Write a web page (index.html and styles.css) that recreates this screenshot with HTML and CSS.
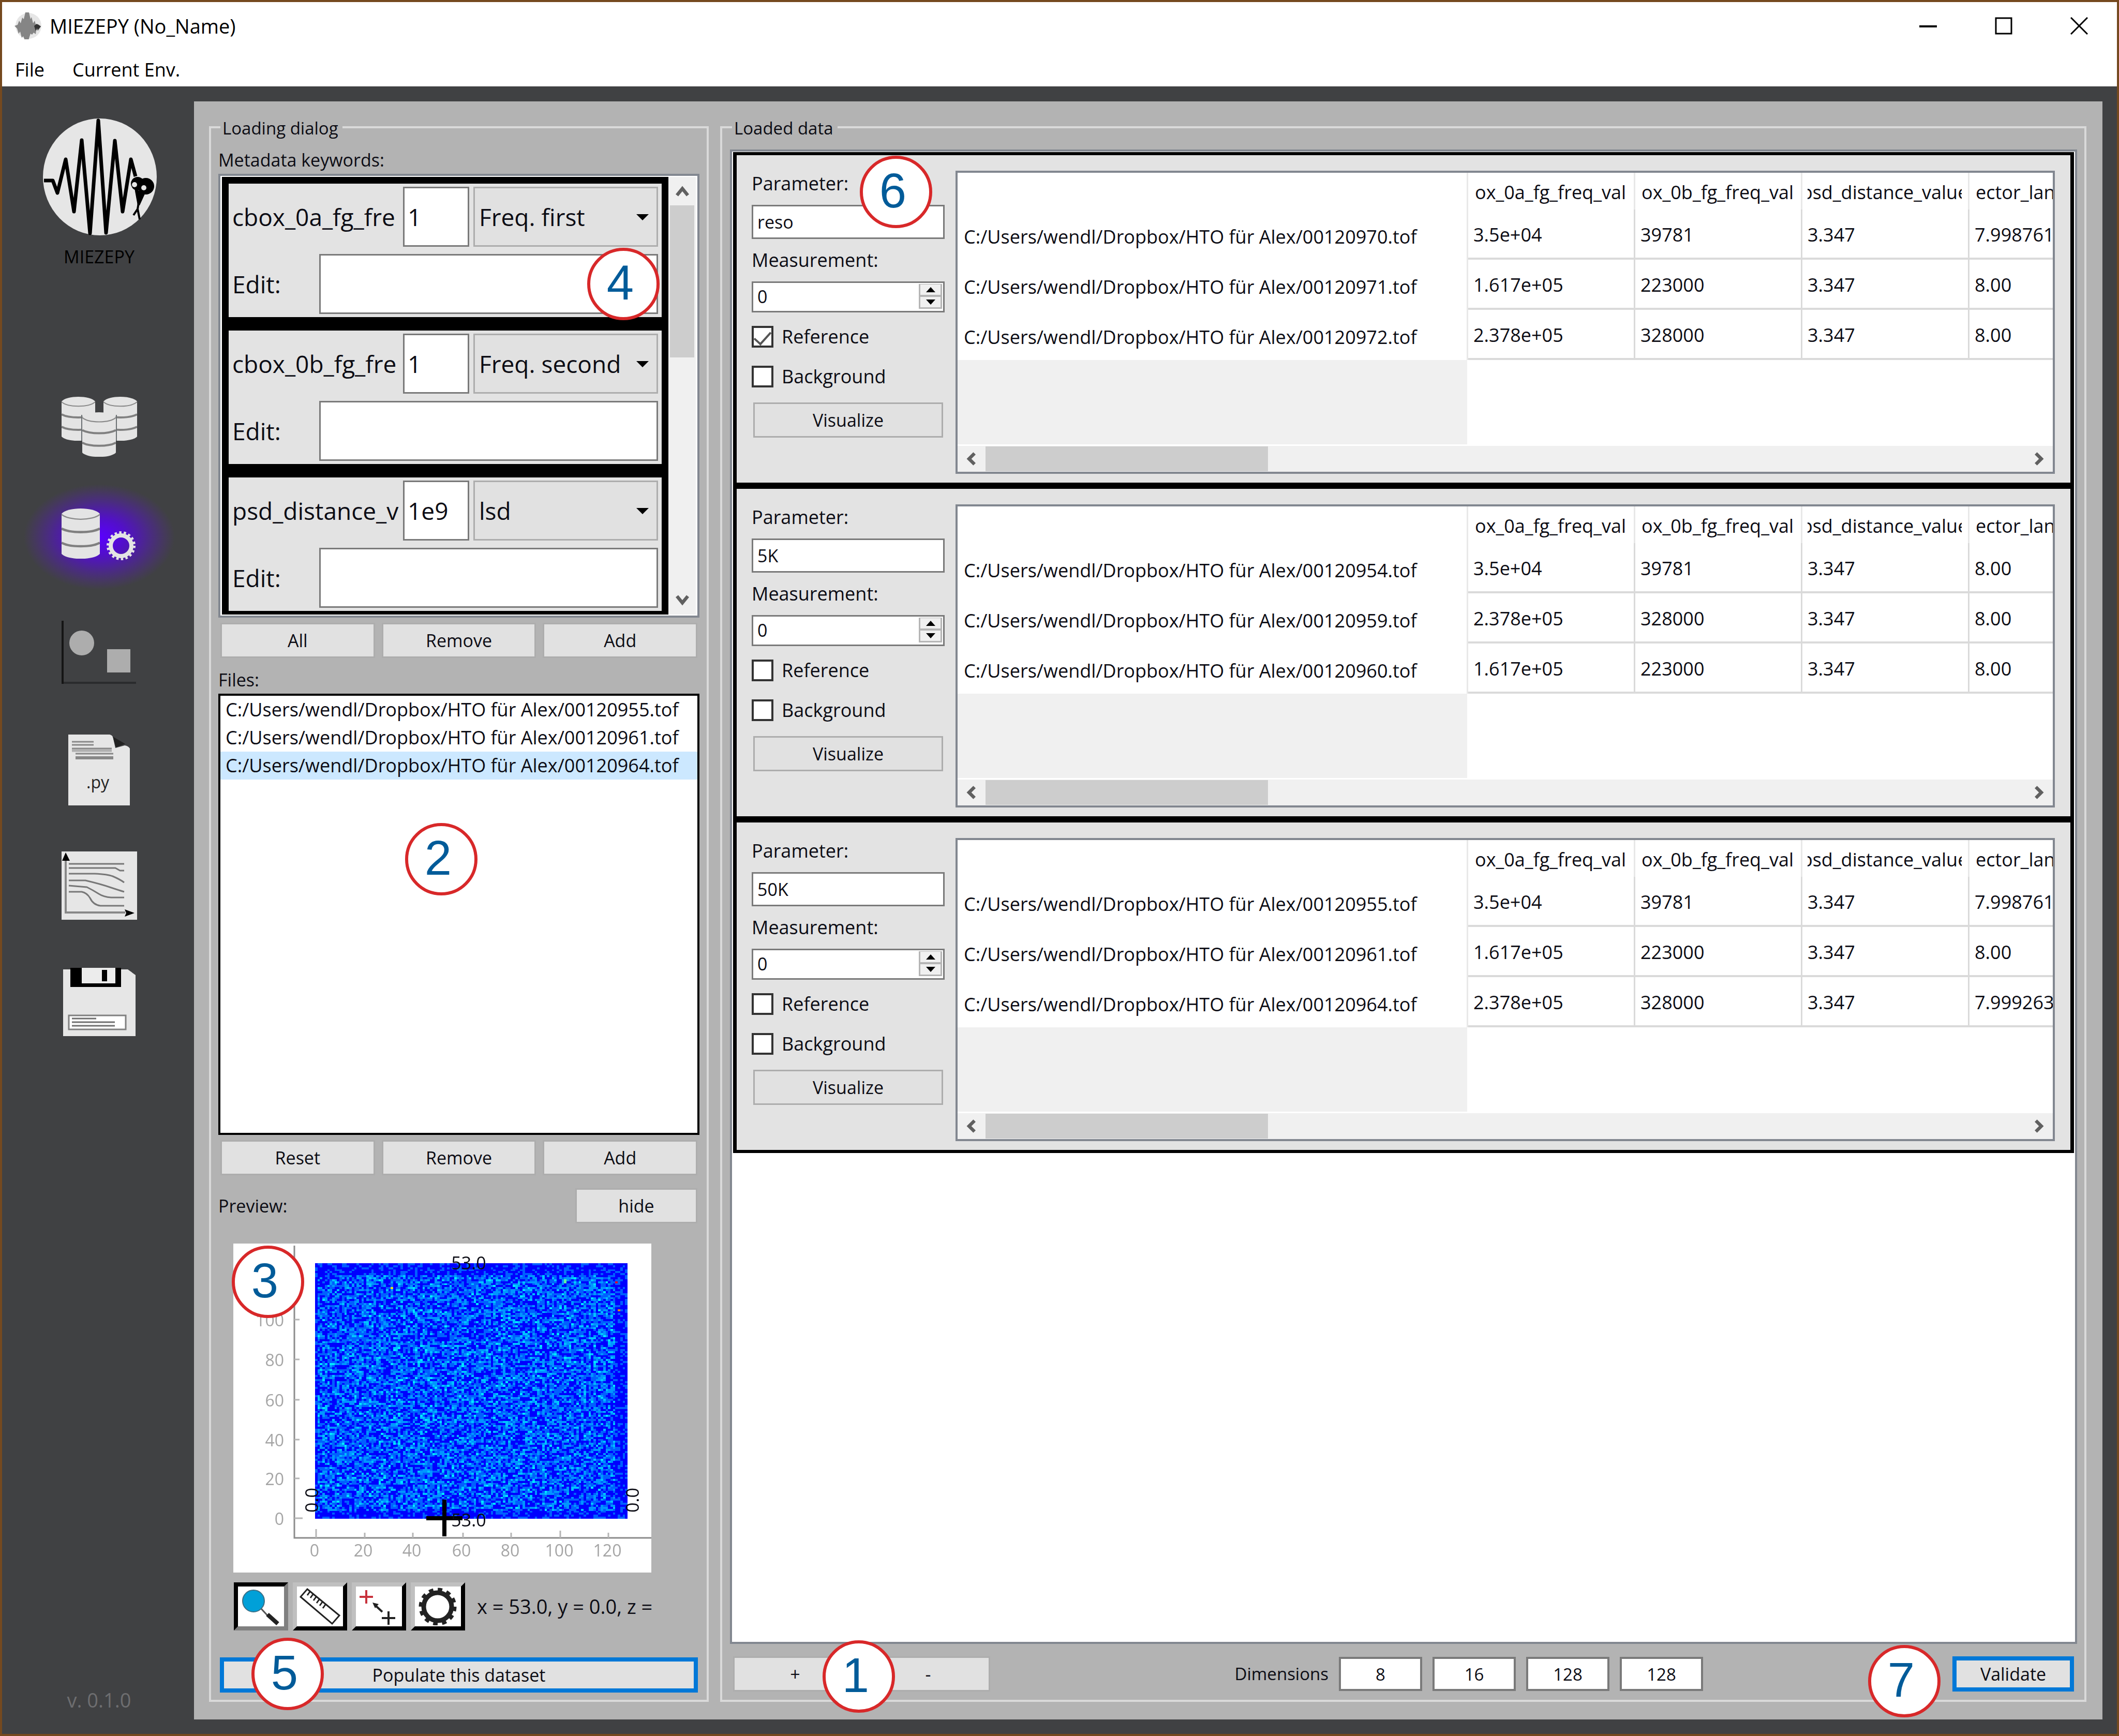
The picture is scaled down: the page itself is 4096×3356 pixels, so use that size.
FILE: index.html
```html
<!DOCTYPE html>
<html lang="en">
<head>
<meta charset="utf-8">
<title>MIEZEPY (No_Name)</title>
<link rel="stylesheet" href="styles.css">
</head>
<body>
<header class="window-head">
  <div class="titlebar">
    <svg class="title-icon" viewBox="0 0 52 52" aria-hidden="true"><circle cx="27" cy="26" r="25" fill="#e6e6e6"/><path d="M0 26l6-2 3-8 3 5 3-11 3 3 3-13h7l3 13 2-4 3 12 3-5 3 10 4-3 5 4-5 8-4-1-1 8-4-3-3 4-3-2-2 6-2 7h-7l-3-8-3 3-3-12-3 4-3-10z" fill="#858585"/><path d="M38 26l5-4 8 5-5 6-3-2-2 5z" fill="#333"/></svg>
    <h1 class="title">MIEZEPY (No_Name)</h1>
    <div class="window-buttons">
      <button type="button" aria-label="Minimize"><svg viewBox="0 0 34 34"><path d="M0 18h34" stroke="#000" stroke-width="4"/></svg></button>
      <button type="button" aria-label="Maximize"><svg viewBox="0 0 34 34"><rect x="2" y="2" width="30" height="30" fill="none" stroke="#000" stroke-width="3"/></svg></button>
      <button type="button" aria-label="Close"><svg viewBox="0 0 34 34"><path d="M1 1l32 32M33 1L1 33" stroke="#000" stroke-width="3"/></svg></button>
    </div>
  </div>
  <nav class="menubar">
    <button type="button">File</button>
    <button type="button">Current Env.</button>
  </nav>
</header>

<main class="workspace">
  <aside class="sidebar">
    <svg class="logo" viewBox="0 0 224 228" aria-hidden="true">
      <ellipse cx="113" cy="114" rx="110" ry="113" fill="#e6e6e6"/>
      <path d="M5 121h17l9 24 16-65 16 101 15-138 16 180L110 5l15 217 17-178 15 137 16-101 9 33" fill="none" stroke="#000" stroke-width="7" stroke-linejoin="round"/>
      <circle cx="186" cy="127" r="13"/><circle cx="202" cy="132" r="16"/><path d="M180 136l6 33h4l10-22z"/>
      <path d="M188 164l-2 12-8 12M186 176l4 20" fill="none" stroke="#000" stroke-width="4"/>
      <circle cx="180" cy="129" r="5" fill="#e6e6e6"/><circle cx="198" cy="135" r="5" fill="#e6e6e6"/>
    </svg>
    <p class="logo-label">MIEZEPY</p>
    <svg width="0" height="0" class="defs" aria-hidden="true"><defs>
      <symbol id="cyl" viewBox="0 0 65 85" preserveAspectRatio="none">
        <path d="M0 9C10-3 55-3 65 9V77C55 88 10 88 0 77Z" fill="#e4e4e4"/>
        <path d="M0 10C12 21 53 21 65 10" fill="none" stroke="#8a8a8a" stroke-width="2"/>
        <path d="M0 34C14 42 51 42 65 34M0 58C14 66 51 66 65 58" fill="none" stroke="#808080" stroke-width="4"/>
      </symbol>
    </defs></svg>
    <nav class="steps">
      <button type="button" aria-label="Environments"><svg viewBox="0 0 148 148">
        <use href="#cyl" x="1" y="25" width="65" height="85"/><use href="#cyl" x="82" y="25" width="65" height="85"/>
        <path d="M40 60v50M107 60v50" stroke="#6b7073" stroke-width="2"/>
        <use href="#cyl" x="41" y="55" width="65" height="86"/></svg></button>
      <button type="button" class="active" aria-label="Data loading"><svg viewBox="0 0 148 148">
        <use href="#cyl" x="1" y="17" width="74" height="97"/>
        <circle cx="116" cy="89" r="20" fill="none" stroke="#e4e4e4" stroke-width="8"/>
        <circle cx="116" cy="89" r="25" fill="none" stroke="#e4e4e4" stroke-width="6" stroke-dasharray="4.4 4.327"/></svg></button>
      <button type="button" aria-label="Masks"><svg viewBox="0 0 148 148">
        <path d="M3 130h142" stroke="#2a2b2d" stroke-width="4"/><path d="M3 10v122" stroke="#151515" stroke-width="4"/>
        <circle cx="40" cy="53" r="24" fill="#adadad"/><rect x="89" y="65" width="45" height="45" fill="#adadad"/></svg></button>
      <button type="button" aria-label="Script"><svg viewBox="0 0 148 148">
        <path d="M14 6h80q6 1 7 8l4 18 18-5q7 1 10 6v110H14z" fill="#e6e6e6"/>
        <path d="M100 10l24 14-18 7z" fill="#222"/>
        <path d="M21 20h42M21 26h42M21 33h77M28 43h73" stroke="#888" stroke-width="3"/><path d="M21 37h77" stroke="#b0b0b0" stroke-width="5"/><path d="M28 51h73" stroke="#888" stroke-width="6"/>
        <text x="49" y="110" class="py">.py</text></svg></button>
      <button type="button" aria-label="Fit"><svg viewBox="0 0 148 148">
        <rect x="1" y="8" width="146" height="132" fill="#e6e6e6"/>
        <path d="M9 20v106h115" fill="none" stroke="#888" stroke-width="4"/>
        <path d="M9 10l8 16H2zM142 127l-19-7 3 7-3 7z"/>
        <path d="M15 32h107M15 40h90l9 5h8M15 51h50q25 1 35 5 14 6 22 12M15 64h32q30 7 50 14 15 5 25 8M15 74l35 3q12 6 23 13 9 6 24 7h25M15 86h25q10 2 16 12 6 13 20 15h46" fill="none" stroke="#777" stroke-width="3"/></svg></button>
      <button type="button" aria-label="Save"><svg viewBox="0 0 148 148">
        <path d="M4 12h125l15 11v118H4z" fill="#e6e6e6"/><path d="M18 9h98v37H18z"/>
        <path d="M40 9h65v30H40z" fill="#ececec"/><path d="M79 13h10v22H79z"/>
        <rect x="15" y="101" width="110" height="27" fill="#fff" stroke="#808080" stroke-width="3"/>
        <path d="M21 107h47M21 114h83M21 121h83" stroke="#707070" stroke-width="3"/></svg></button>
    </nav>
    <p class="version">v. 0.1.0</p>
  </aside>

  <section class="panel">
    <fieldset class="group">
      <legend>Loading dialog</legend>
      <p class="caption first">Metadata keywords:</p>
      <div class="meta-box">
        <div class="meta-list">
          <div class="meta-card">
            <span class="badge b4">4</span>
            <div class="meta-row"><span class="key">cbox_0a_fg_fre</span><input class="factor" value="1" aria-label="Factor"><span class="combo"><select aria-label="Role"><option>Freq. first</option></select></span></div>
            <div class="meta-row"><label class="edit" for="e1">Edit:</label><input class="edit-input" id="e1"></div>
          </div>
          <div class="meta-card">
            <div class="meta-row"><span class="key">cbox_0b_fg_fre</span><input class="factor" value="1" aria-label="Factor"><span class="combo"><select aria-label="Role"><option>Freq. second</option></select></span></div>
            <div class="meta-row"><label class="edit" for="e2">Edit:</label><input class="edit-input" id="e2"></div>
          </div>
          <div class="meta-card">
            <div class="meta-row"><span class="key">psd_distance_v</span><input class="factor" value="1e9" aria-label="Factor"><span class="combo"><select aria-label="Role"><option>lsd</option></select></span></div>
            <div class="meta-row"><label class="edit" for="e3">Edit:</label><input class="edit-input" id="e3"></div>
          </div>
        </div>
        <div class="vscroll"><svg viewBox="0 0 32 26"><path d="M3 23L16 7l13 16" /></svg><div class="vtrack"><div class="vthumb"></div></div><svg viewBox="0 0 32 26"><path d="M3 3l13 16L29 3"/></svg></div>
      </div>
      <div class="button-row"><button type="button" class="btn">All</button><button type="button" class="btn">Remove</button><button type="button" class="btn">Add</button></div>
      <p class="caption">Files:</p>
      <div class="files">
        <ul>
          <li>C:/Users/wendl/Dropbox/HTO für Alex/00120955.tof</li>
          <li>C:/Users/wendl/Dropbox/HTO für Alex/00120961.tof</li>
          <li class="selected">C:/Users/wendl/Dropbox/HTO für Alex/00120964.tof</li>
        </ul>
        <span class="badge b2">2</span>
      </div>
      <div class="button-row"><button type="button" class="btn">Reset</button><button type="button" class="btn">Remove</button><button type="button" class="btn">Add</button></div>
      <div class="preview-head"><span>Preview:</span><button type="button" class="btn">hide</button></div>
      <div class="plot">
        <canvas id="heat" width="128" height="128"></canvas>
        <svg viewBox="0 0 808 636">
          <path d="M118 4v565h690" fill="none" stroke="#8c8c8c" stroke-width="3"/>
          <path d="M118 531h16M118 454h10M118 379h10M118 302h10M118 224h10M118 147h10M160 569v-17M254 569v-10M347 569v-10M444 569v-10M537 569v-10M632 569v-14M725 569v-10" stroke="#b5b5b5" stroke-width="3"/>
          <g class="ticks end"><text x="98" y="544">0</text><text x="98" y="467">20</text><text x="98" y="392">40</text><text x="98" y="315">60</text><text x="98" y="237">80</text><text x="98" y="160">100</text></g>
          <g class="ticks mid"><text x="157" y="605">0</text><text x="251" y="605">20</text><text x="345" y="605">40</text><text x="441" y="605">60</text><text x="535" y="605">80</text><text x="630" y="605">100</text><text x="723" y="605">120</text></g>
          <path d="M408 495v71M373 531h70" stroke="#000" stroke-width="8"/>
          <g class="ticks cursor"><text x="455" y="50">53.0</text><text x="455" y="547">53.0</text><text transform="translate(164 496) rotate(-90)">0.0</text><text transform="translate(784 496) rotate(-90)">0.0</text></g>
        </svg>
        <span class="badge b3">3</span>
      </div>
      <div class="tools">
        <button type="button" class="tool on" aria-label="Zoom"><svg viewBox="0 0 85 73"><path d="M43 41l12 13" stroke="#555" stroke-width="3"/><path d="M55 52l20 18" stroke="#222" stroke-width="8"/><circle cx="28" cy="26" r="21" fill="#00a0d8" stroke="#3c6f85" stroke-width="2"/></svg></button>
        <button type="button" class="tool" aria-label="Measure"><svg viewBox="0 0 85 73"><path d="M18 3L80 54 66 70 5 18zM23 8l-5 7M29 13l-5 7M35 18l-5 7M41 23l-5 7M47 28l-5 7M53 33l-5 7" fill="none" stroke="#222" stroke-width="3"/></svg></button>
        <button type="button" class="tool" aria-label="Move points"><svg viewBox="0 0 85 73"><path d="M18 5v26M5 18h26" stroke="#c8323c" stroke-width="4"/><path d="M61 46v26M48 59h26M36 35l13 12" stroke="#222" stroke-width="4"/><path d="M30 29l12 3-7 8z" fill="#222"/></svg></button>
        <button type="button" class="tool" aria-label="Settings"><svg viewBox="0 0 85 73"><circle cx="42" cy="37" r="27" fill="none" stroke="#222" stroke-width="9"/><circle cx="42" cy="37" r="32" fill="none" stroke="#222" stroke-width="9" stroke-dasharray="8.4 8.35"/></svg></button>
        <output>x = 53.0, y = 0.0, z =</output>
      </div>
      <div class="populate"><button type="button" class="btn primary">Populate this dataset</button><span class="badge b5">5</span></div>
    </fieldset>

    <fieldset class="group loaded">
      <legend>Loaded data</legend>
      <div class="data-box">
        <article class="data-card">
          <span class="badge b6">6</span>
          <form class="params">
            <label for="p1">Parameter:</label><input class="field" id="p1" value="reso">
            <label for="m1">Measurement:</label><div class="spin"><input id="m1" type="number" value="0"><span class="arrows"><i class="up"></i><i class="down"></i></span></div>
            <label class="check c1"><input type="checkbox" checked>Reference</label>
            <label class="check"><input type="checkbox">Background</label>
            <button type="button" class="btn">Visualize</button>
          </form>
          <div class="sheet">
            <table>
              <thead><tr><td class="file"></td><th><span>ox_0a_fg_freq_val</span></th><th><span>ox_0b_fg_freq_val</span></th><th><span>psd_distance_value</span></th><th class="last"><span>ector_lan</span></th></tr></thead>
              <tbody>
                <tr><th class="file">C:/Users/wendl/Dropbox/HTO für Alex/00120970.tof</th><td>3.5e+04</td><td>39781</td><td>3.347</td><td>7.9987612</td></tr>
                <tr><th class="file">C:/Users/wendl/Dropbox/HTO für Alex/00120971.tof</th><td>1.617e+05</td><td>223000</td><td>3.347</td><td>8.00</td></tr>
                <tr><th class="file">C:/Users/wendl/Dropbox/HTO für Alex/00120972.tof</th><td>2.378e+05</td><td>328000</td><td>3.347</td><td>8.00</td></tr>
              </tbody>
            </table>
            <div class="filler"></div>
            <div class="hscroll"><svg viewBox="0 0 24 32"><path d="M19 3L6 16l13 13"/></svg><div class="htrack"><div class="hthumb"></div></div><svg viewBox="0 0 24 32"><path d="M5 3l13 13L5 29"/></svg></div>
          </div>
        </article>
        <article class="data-card">
          <form class="params">
            <label for="p2">Parameter:</label><input class="field" id="p2" value="5K">
            <label for="m2">Measurement:</label><div class="spin"><input id="m2" type="number" value="0"><span class="arrows"><i class="up"></i><i class="down"></i></span></div>
            <label class="check c1"><input type="checkbox">Reference</label>
            <label class="check"><input type="checkbox">Background</label>
            <button type="button" class="btn">Visualize</button>
          </form>
          <div class="sheet">
            <table>
              <thead><tr><td class="file"></td><th><span>ox_0a_fg_freq_val</span></th><th><span>ox_0b_fg_freq_val</span></th><th><span>psd_distance_value</span></th><th class="last"><span>ector_lan</span></th></tr></thead>
              <tbody>
                <tr><th class="file">C:/Users/wendl/Dropbox/HTO für Alex/00120954.tof</th><td>3.5e+04</td><td>39781</td><td>3.347</td><td>8.00</td></tr>
                <tr><th class="file">C:/Users/wendl/Dropbox/HTO für Alex/00120959.tof</th><td>2.378e+05</td><td>328000</td><td>3.347</td><td>8.00</td></tr>
                <tr><th class="file">C:/Users/wendl/Dropbox/HTO für Alex/00120960.tof</th><td>1.617e+05</td><td>223000</td><td>3.347</td><td>8.00</td></tr>
              </tbody>
            </table>
            <div class="filler"></div>
            <div class="hscroll"><svg viewBox="0 0 24 32"><path d="M19 3L6 16l13 13"/></svg><div class="htrack"><div class="hthumb"></div></div><svg viewBox="0 0 24 32"><path d="M5 3l13 13L5 29"/></svg></div>
          </div>
        </article>
        <article class="data-card">
          <form class="params">
            <label for="p3">Parameter:</label><input class="field" id="p3" value="50K">
            <label for="m3">Measurement:</label><div class="spin"><input id="m3" type="number" value="0"><span class="arrows"><i class="up"></i><i class="down"></i></span></div>
            <label class="check c1"><input type="checkbox">Reference</label>
            <label class="check"><input type="checkbox">Background</label>
            <button type="button" class="btn">Visualize</button>
          </form>
          <div class="sheet">
            <table>
              <thead><tr><td class="file"></td><th><span>ox_0a_fg_freq_val</span></th><th><span>ox_0b_fg_freq_val</span></th><th><span>psd_distance_value</span></th><th class="last"><span>ector_lan</span></th></tr></thead>
              <tbody>
                <tr><th class="file">C:/Users/wendl/Dropbox/HTO für Alex/00120955.tof</th><td>3.5e+04</td><td>39781</td><td>3.347</td><td>7.9987612</td></tr>
                <tr><th class="file">C:/Users/wendl/Dropbox/HTO für Alex/00120961.tof</th><td>1.617e+05</td><td>223000</td><td>3.347</td><td>8.00</td></tr>
                <tr><th class="file">C:/Users/wendl/Dropbox/HTO für Alex/00120964.tof</th><td>2.378e+05</td><td>328000</td><td>3.347</td><td>7.9992638</td></tr>
              </tbody>
            </table>
            <div class="filler"></div>
            <div class="hscroll"><svg viewBox="0 0 24 32"><path d="M19 3L6 16l13 13"/></svg><div class="htrack"><div class="hthumb"></div></div><svg viewBox="0 0 24 32"><path d="M5 3l13 13L5 29"/></svg></div>
          </div>
        </article>
      </div>
      <div class="foot">
        <div class="add-remove"><button type="button" class="btn">+</button><button type="button" class="btn">-</button><span class="badge b1">1</span></div>
        <div class="dims"><span>Dimensions</span><input value="8" aria-label="Dimension 1"><input value="16" aria-label="Dimension 2"><input value="128" aria-label="Dimension 3"><input value="128" aria-label="Dimension 4"></div>
        <div class="validate"><button type="button" class="btn primary">Validate</button><span class="badge b7">7</span></div>
      </div>
    </fieldset>
  </section>
</main>
<script src="heatmap.js"></script>
</body>
</html>
```
FILE: styles.css
```css
* { box-sizing: border-box; }
html { height: 100%; }
body {
  margin: 0;
  height: 100vh;
  display: flex;
  flex-direction: column;
  border: 4px solid #75491f;
  background: #404143;
  color: #0c0c14;
  font: 34px/46px "Open Sans", "Noto Sans", sans-serif;
  overflow: hidden;
}
button, input, select { font: inherit; color: inherit; margin: 0; border-radius: 0; }
input, select { min-width: 0; outline: 0; }
p, h1, ul { margin: 0; padding: 0; font-weight: normal; list-style: none; }

.window-head { background: #fff; color: #000; }
.titlebar { display: flex; align-items: center; height: 92px; padding-left: 24px; }
.title-icon { width: 52px; height: 52px; }
.title { flex: 1; margin-left: 16px; font-size: 38px; }
.window-buttons { display: flex; }
.window-buttons button { width: 146px; height: 92px; border: 0; background: none; padding: 0; }
.window-buttons svg { width: 34px; height: 34px; display: block; margin: auto; }
.menubar { display: flex; gap: 54px; height: 71px; padding: 16px 25px 0; }
.menubar button { border: 0; padding: 0; background: none; font-size: 36px; height: 46px; }

.workspace { flex: 1; min-height: 0; display: grid; grid-template-columns: 371px minmax(0, 1fr); padding: 29px 28px 28px 0; }
.sidebar { display: flex; flex-direction: column; align-items: center; padding: 32px 0 15px 4px; }
.logo { width: 224px; height: 228px; }
.logo-label { margin-top: 17px; color: #000; }
.defs { position: absolute; }
.steps { display: flex; flex-direction: column; gap: 76px; margin-top: 223px; }
.steps button { width: 148px; height: 148px; padding: 0; border: 0; background: none; position: relative; }
.steps svg { display: block; position: relative; width: 148px; height: 148px; }
.steps .active::before {
  content: ""; position: absolute; inset: -30px -72px -26px;
  background: radial-gradient(closest-side, #5a00ff, #5210c8 35%, #4a2c80 68%, #45395c 86%, #404143);
}
.py { font: 32px "Open Sans", sans-serif; fill: #222; }
.version { margin-top: auto; font-size: 38px; color: #6e6e70; }

.panel { display: grid; grid-template-columns: minmax(0, 966fr) minmax(0, 2641fr); gap: 22px; padding: 25px 31px 34px 29px; background: #b3b3b3; min-height: 0; }
.group { display: flex; flex-direction: column; min-width: 0; min-height: 0; margin: 0; padding: 0 14px 14px; border: 4px solid #d9d9d9; }
.loaded { padding: 0 14px 16px 15px; }
legend { padding: 4px 8px 0 4px; margin-left: 4px; font-size: 33px; }
.caption { margin: 19px 0 4px; }
.first { margin-top: 15px; }

.btn { height: 68px; padding: 0; border: 3px solid #adadad; background: #e1e1e1; text-align: center; }
.primary { border: 8px solid #0078d7; }
.button-row { display: flex; gap: 13px; margin: 10px 4px 0; }
.button-row .btn { flex: 1; }

.meta-box { flex: 1 1 0; min-height: 0; display: flex; padding: 2px 3px; border: 4px solid #828790; background: #fff; }
.meta-list { flex: 1; min-width: 0; overflow: hidden; font-size: 46px; }
.meta-card { position: relative; border: 13px solid #000; padding: 6px 7px; background: #e3e3e3; display: flex; flex-direction: column; gap: 14px; }
.meta-row { display: flex; align-items: center; gap: 8px; height: 116px; }
.key { flex: 1; min-width: 0; overflow: hidden; white-space: nowrap; line-height: 64px; }
.factor { width: 128px; height: 116px; padding: 0 6px; border: 3px solid #7a7a7a; background: #fff; }
.combo { position: relative; width: 357px; height: 116px; }
.combo select { width: 100%; height: 100%; padding: 0 8px; line-height: 64px; appearance: none; background: #e1e1e1; border: 3px solid #adadad; }
.combo::after { content: ""; position: absolute; right: 18px; top: 53px; border: 12px solid transparent; border-top-color: #000; border-bottom: 0; }
.edit { flex: 1; }
.edit-input { width: 655px; height: 116px; border: 3px solid #7a7a7a; background: #fff; }

.vscroll { width: 53px; background: #f0f0f0; display: flex; flex-direction: column; align-items: center; }
.vscroll svg { width: 26px; height: 21px; margin: 17px 0; }
.vscroll path, .hscroll path { fill: none; stroke: #606060; stroke-width: 8; }
.vtrack { flex: 1; width: 47px; }
.vthumb { height: 40%; background: #cdcdcd; }

.files { position: relative; flex: 1 1 0; min-height: 0; border: 4px solid #000; background: #fff; font-size: 36px; }
.files li { height: 54px; line-height: 53px; padding-left: 10px; white-space: nowrap; }
.files .selected { background: #cce8ff; }

.preview-head { display: flex; justify-content: space-between; align-items: center; margin: 25px 4px 0 0; }
.preview-head .btn { width: 236px; }
.plot { position: relative; display: grid; width: 808px; height: 636px; margin: 39px 0 0 29px; background: #fff; }
.plot canvas, .plot svg { grid-area: 1 / 1; }
.plot canvas { width: 604px; height: 494px; margin: 38px 0 0 158px; image-rendering: pixelated; }
.plot svg { position: relative; width: 808px; height: 636px; }
.ticks { font: 32px "Open Sans", sans-serif; fill: #a5a5a5; }
.end { text-anchor: end; }
.mid { text-anchor: middle; }
.cursor { font-size: 34px; fill: #0c0c14; text-anchor: middle; }
.tools { display: flex; gap: 9px; width: 808px; height: 93px; margin: 19px 0 0 30px; }
.tool { flex: none; width: 105px; height: 93px; padding: 0; border: 8px solid; border-color: #c0c0c0 #000 #000 #c0c0c0; background: #fff; }
.tool.on { border-color: #000 #808080 #808080 #000; }
.tool svg { display: block; width: 85px; height: 73px; margin: auto; }
.tools output { flex: 1; margin-left: 14px; white-space: nowrap; font-size: 38px; line-height: 93px; }
.populate { position: relative; display: flex; margin: 52px 3px 0; }
.populate .btn { flex: 1; }

.data-box { flex: 1; min-height: 0; margin-top: 18px; padding: 1px 2px; border: 4px solid #828790; background: #fff; }
.data-card { position: relative; display: flex; gap: 21px; height: 645px; padding: 30px 30px 17px 29px; border: 6px solid #000; border-width: 6px 7px; background: #e3e3e3; }
.params { display: flex; flex-direction: column; width: 373px; padding-top: 2px; }
.params label { font-size: 36px; }
.field { height: 66px; margin: 18px 0; padding: 0 8px; border: 3px solid #7a7a7a; background: #fff; }
.spin { display: flex; height: 60px; margin-top: 18px; padding: 2px 2px 4px; border: 3px solid #7a7a7a; background: #fff; }
.spin input { flex: 1; padding: 0 6px; border: 0; background: none; appearance: textfield; }
.spin input::-webkit-inner-spin-button { display: none; }
.arrows { width: 45px; display: grid; grid-template-rows: 1fr 1fr; }
.arrows i { display: grid; place-items: center; background: #f0f0f0; border: 3px solid #b5b5b5; border-top-width: 1px; }
.arrows i::before { content: ""; border: 9px solid transparent; }
.arrows .up::before { border-top: 0; border-bottom: 10px solid #000; }
.arrows .down::before { border-bottom: 0; border-top: 10px solid #000; }
.check { display: flex; align-items: center; gap: 16px; height: 40px; margin-top: 37px; }
.c1 { margin-top: 27px; }
.check input { appearance: none; display: grid; place-items: center; width: 42px; height: 42px; border: 4px solid #333; background: #fff; }
.check input:checked::before { content: ""; width: 14px; height: 28px; margin-bottom: 8px; border: solid #555; border-width: 0 4px 4px 0; transform: rotate(42deg); }
.params .btn { height: 68px; margin: 30px 3px 0; }

.sheet { flex: 1; min-width: 0; display: flex; flex-direction: column; border: 4px solid #828790; background: #fff; font-size: 36px; overflow: hidden; }
table { width: 100%; table-layout: fixed; border-collapse: separate; border-spacing: 0; }
th, td { width: 323px; height: 97px; padding: 4px 0 0 10px; text-align: left; font-weight: normal; white-space: nowrap; overflow: hidden; }
tbody td { border-right: 3px solid #dadada; border-bottom: 4px solid #dadada; }
tbody td:last-child { border-right: 0; }
thead th { height: 71px; padding: 4px 12px 0 10px; border-right: 3px solid #e8e8e8; }
thead td { height: 71px; }
thead span { display: flex; justify-content: center; overflow: hidden; }
thead .last { width: auto; padding: 4px 0 0 12px; border-right: 0; }
thead .last span { justify-content: flex-start; }
.file { width: 987px; padding: 8px 0 0 12px; border-right: 3px solid #e8e8e8; }
.filler { flex: 1; width: 985px; margin-bottom: 3px; background: #f0f0f0; }
.hscroll { display: flex; align-items: center; height: 50px; background: #f0f0f0; }
.hscroll svg { width: 20px; height: 26px; margin: 0 17px; }
.htrack { flex: 1; height: 48px; }
.hthumb { width: 546px; height: 48px; background: #cdcdcd; }

.foot { display: flex; align-items: center; margin-top: 24px; }
.add-remove { position: relative; display: flex; gap: 17px; margin-left: 6px; }
.add-remove .btn { width: 240px; }
.dims { display: flex; align-items: center; gap: 20px; margin-left: auto; font-size: 33px; }
.dims input { width: 161px; height: 66px; padding: 0; text-align: center; border: 4px solid #7a7a7a; background: #fff; }
.validate { position: relative; margin: 0 6px 0 482px; }
.validate .btn { width: 235px; }

.badge { position: absolute; z-index: 2; width: 140px; height: 140px; margin: -70px 0 0 -70px; padding-right: 12px; border: 6px solid #d82829; border-radius: 50%; background: #fff; color: #005b99; font: 94px/124px "Liberation Sans", Arial, sans-serif; text-align: center; }
.b1 { left: 243px; top: 39px; }
.b2 { left: 427px; top: 316px; }
.b3 { left: 67px; top: 74px; }
.b4 { left: 763px; top: 194px; }
.b5 { left: 131px; top: 32px; }
.b6 { left: 308px; top: 71px; }
.b7 { left: -93px; top: 48px; }
```
FILE: heatmap.js
```js
// Detector image: sparse neutron counts on a 128 x 128 grid.
const canvas = document.getElementById('heat');
const ctx = canvas.getContext('2d');
const palette = ['#0000ff', '#0060ff', '#0096ff', '#00c4ff', '#00e8ff'];
let seed = 20955;
function rand() {
  seed = (seed * 1664525 + 1013904223) % 4294967296;
  return seed / 4294967296;
}
for (let y = 0; y < 128; y++) {
  for (let x = 0; x < 128; x++) {
    const edge = x > 122 || y < 6 || y > 123 || x < 1;
    const r = rand() + (edge ? -0.3 : 0);
    let level = 0;
    if (r > 0.4) level = 1;
    if (r > 0.7) level = 2;
    if (r > 0.91) level = 3;
    if (r > 0.98) level = 4;
    ctx.fillStyle = palette[level];
    ctx.fillRect(x, y, 1, 1);
  }
}
[[31, 12, '#e0e020'], [102, 8, '#60f0a0'], [102, 9, '#60f0a0'], [123, 9, '#e00030'], [124, 23, '#e08020']].forEach(([x, y, c]) => {
  ctx.fillStyle = c;
  ctx.fillRect(x, y, 1, 1);
});
```
